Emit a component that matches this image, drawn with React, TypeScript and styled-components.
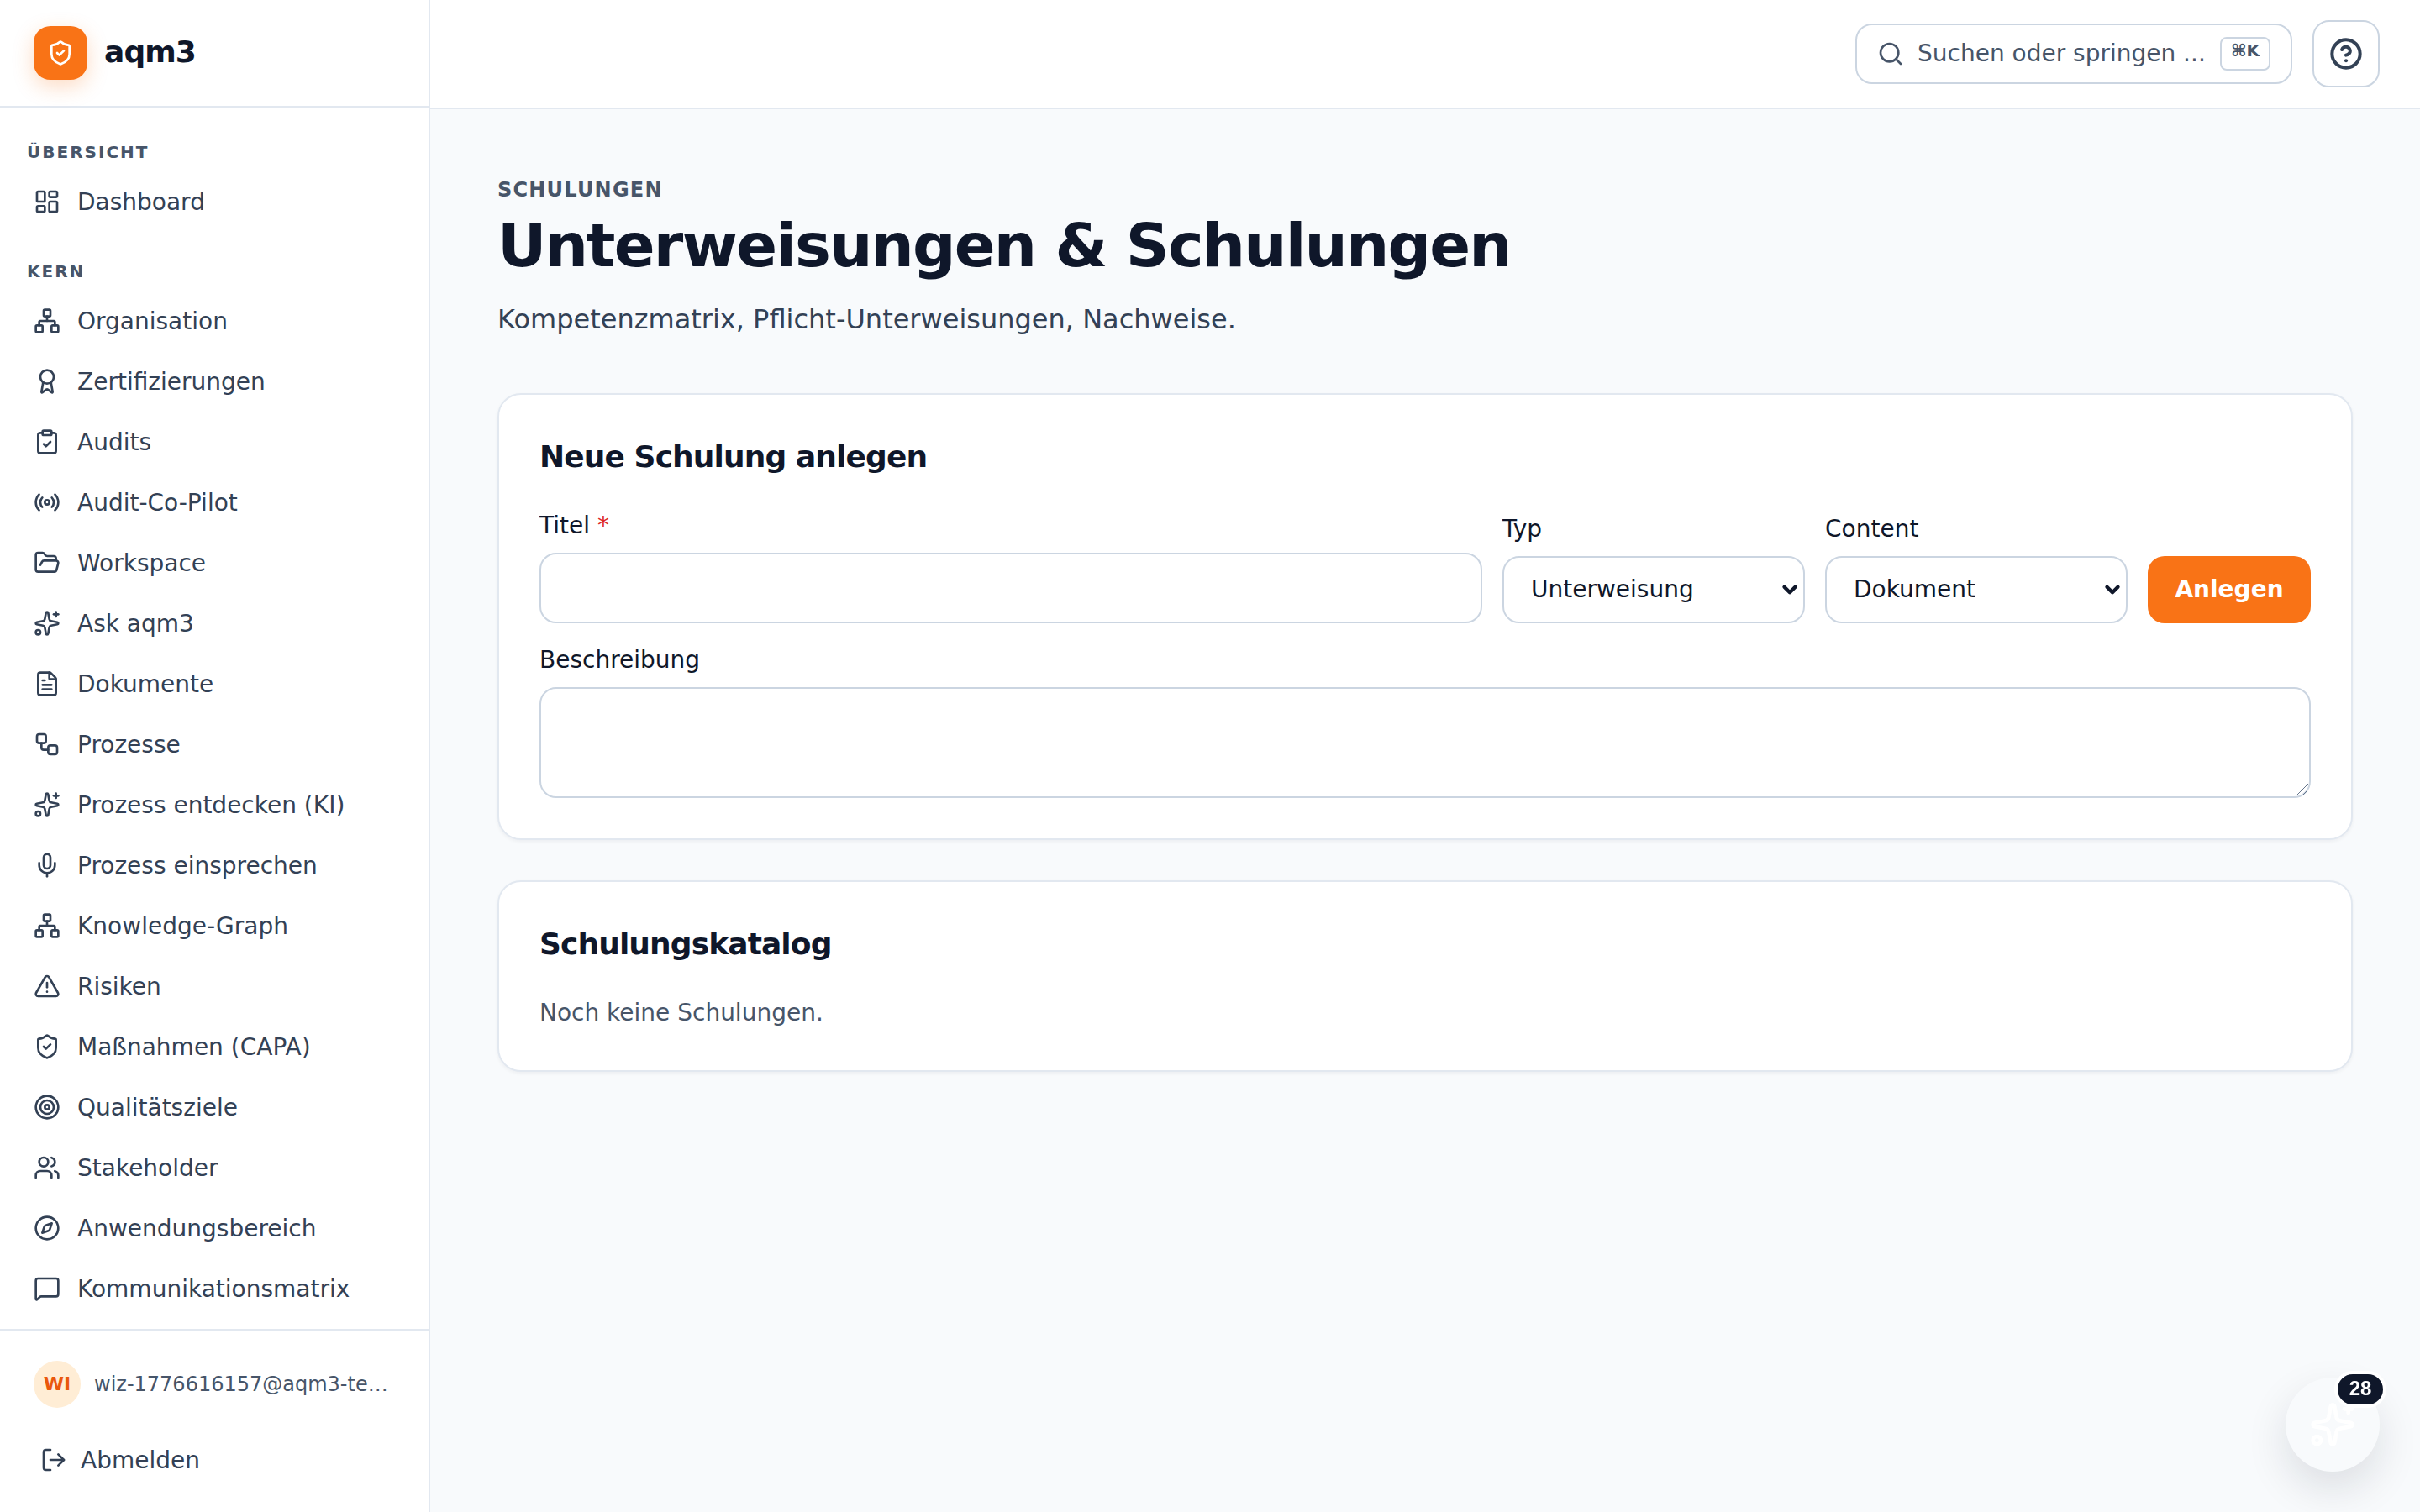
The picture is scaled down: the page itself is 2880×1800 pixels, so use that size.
import React from "react";
import styled, { createGlobalStyle } from "styled-components";
import {
    Award, ChevronDown, CircleHelp, ClipboardCheck, Compass, FileText, FolderOpen, LayoutDashboard, LogOut,
    MessageSquare, Mic, Network, Radio, Search, ShieldCheck, Sparkles, Target, TriangleAlert,
    Users, Workflow,
} from "lucide-react";

// the reference is a 1440x900 page at 2x, so everything below is in 1x px
const GlobalStyle = createGlobalStyle`
    html, body { margin: 0; padding: 0; background: #f8fafc; }
    #root { zoom: 2; }
    * { box-sizing: border-box; }
    body {
        font-family: "DejaVu Sans", sans-serif;
        color: #0f172a;
    }
`;

const sections = [
    {
        title: "Übersicht",
        items: [{ label: "Dashboard", icon: LayoutDashboard }],
    },
    {
        title: "Kern",
        items: [
            { label: "Organisation", icon: Network },
            { label: "Zertifizierungen", icon: Award },
            { label: "Audits", icon: ClipboardCheck },
            { label: "Audit-Co-Pilot", icon: Radio },
            { label: "Workspace", icon: FolderOpen },
            { label: "Ask aqm3", icon: Sparkles },
            { label: "Dokumente", icon: FileText },
            { label: "Prozesse", icon: Workflow },
            { label: "Prozess entdecken (KI)", icon: Sparkles },
            { label: "Prozess einsprechen", icon: Mic },
            { label: "Knowledge-Graph", icon: Network },
            { label: "Risiken", icon: TriangleAlert },
            { label: "Maßnahmen (CAPA)", icon: ShieldCheck },
            { label: "Qualitätsziele", icon: Target },
            { label: "Stakeholder", icon: Users },
            { label: "Anwendungsbereich", icon: Compass },
            { label: "Kommunikationsmatrix", icon: MessageSquare },
        ],
    },
];

export default function App() {
    return (
        <Shell>
            <GlobalStyle />
            <Sidebar>
                <Brand>
                    <LogoMark><ShieldCheck size={16} /></LogoMark>
                    <BrandName>aqm3</BrandName>
                </Brand>
                <Nav>
                    {sections.map((section) => (
                        <NavSection key={section.title}>
                            <SectionLabel>{section.title}</SectionLabel>
                            {section.items.map((item) => (
                                <NavItem key={item.label} href="#">
                                    <item.icon size={16} />
                                    {item.label}
                                </NavItem>
                            ))}
                        </NavSection>
                    ))}
                </Nav>
                <SidebarFooter>
                    <UserRow>
                        <Avatar>WI</Avatar>
                        <UserMail>wiz-1776616157@aqm3-test.example</UserMail>
                    </UserRow>
                    <LogoutButton>
                        <LogOut size={16} />
                        Abmelden
                    </LogoutButton>
                </SidebarFooter>
            </Sidebar>

            <Content>
                <Topbar>
                    <SearchButton>
                        <Search size={16} />
                        <SearchText>Suchen oder springen ...</SearchText>
                        <Kbd>⌘K</Kbd>
                    </SearchButton>
                    <HelpButton><CircleHelp size={20} strokeWidth={2.4} /></HelpButton>
                </Topbar>

                <Main>
                    <Eyebrow>Schulungen</Eyebrow>
                    <PageTitle>Unterweisungen &amp; Schulungen</PageTitle>
                    <Lead>Kompetenzmatrix, Pflicht-Unterweisungen, Nachweise.</Lead>

                    <Card>
                        <CardTitle>Neue Schulung anlegen</CardTitle>
                        <FormRow>
                            <GrowField>
                                <FieldLabel>Titel <Required>*</Required></FieldLabel>
                                <TextInput type="text" />
                            </GrowField>
                            <SelectField>
                                <FieldLabel>Typ</FieldLabel>
                                <SelectWrap>
                                    <Select defaultValue="Unterweisung">
                                        <option>Unterweisung</option>
                                        <option>Schulung</option>
                                    </Select>
                                    <SelectArrow><ChevronDown size={13} strokeWidth={4} /></SelectArrow>
                                </SelectWrap>
                            </SelectField>
                            <SelectField>
                                <FieldLabel>Content</FieldLabel>
                                <SelectWrap>
                                    <Select defaultValue="Dokument">
                                        <option>Dokument</option>
                                        <option>Video</option>
                                    </Select>
                                    <SelectArrow><ChevronDown size={13} strokeWidth={4} /></SelectArrow>
                                </SelectWrap>
                            </SelectField>
                            <PrimaryButton>Anlegen</PrimaryButton>
                        </FormRow>
                        <DescriptionField>
                            <FieldLabel>Beschreibung</FieldLabel>
                            <TextAreaWrap>
                                <TextArea />
                                <ResizeGrip viewBox="0 0 8 8">
                                    <path d="M0.5 7.5 L7.5 0.5 M4 7.5 L7.5 4" />
                                </ResizeGrip>
                            </TextAreaWrap>
                        </DescriptionField>
                    </Card>

                    <Card>
                        <CardTitle>Schulungskatalog</CardTitle>
                        <EmptyText>Noch keine Schulungen.</EmptyText>
                    </Card>
                </Main>
            </Content>

            <Fab>
                <Sparkles size={28} />
                <FabBadge>28</FabBadge>
            </Fab>
        </Shell>
    );
}

const Shell = styled.div`
    display: flex;
    height: 900px;
    overflow: hidden;
`;

const Sidebar = styled.aside`
    width: 256px;
    flex-shrink: 0;
    display: flex;
    flex-direction: column;
    background: #fff;
    border-right: 1px solid #e2e8f0;
`;

const Brand = styled.div`
    height: 64px;
    flex-shrink: 0;
    display: flex;
    align-items: center;
    gap: 10px;
    padding: 0 20px;
    border-bottom: 1px solid #e2e8f0;
`;

const LogoMark = styled.div`
    width: 32px;
    height: 32px;
    display: flex;
    align-items: center;
    justify-content: center;
    border-radius: 10px;
    background: #f97316;
    color: #fff;
    box-shadow: 0 4px 12px rgba(249, 115, 22, 0.25);
`;

const BrandName = styled.span`
    padding-bottom: 2px;
    font-size: 18px;
    font-weight: 700;
    letter-spacing: -0.45px;
    color: #0f172a;
`;

const Nav = styled.nav`
    flex: 1;
    min-height: 0;
    overflow: hidden;
    padding: 19px 0 0;
`;

const NavSection = styled.div`
    & + & { margin-top: 16px; }
`;

const SectionLabel = styled.div`
    margin: 0 0 4px 16px;
    font-size: 10px;
    line-height: 15px;
    font-weight: 700;
    letter-spacing: 1px;
    text-transform: uppercase;
    color: #475569;
`;

const NavItem = styled.a`
    display: flex;
    align-items: center;
    gap: 10px;
    height: 36px;
    padding-left: 20px;
    font-size: 14px;
    color: #334155;
    text-decoration: none;
    svg { flex-shrink: 0; }
`;

const SidebarFooter = styled.div`
    height: 109px;
    flex-shrink: 0;
    padding: 18px 24px 0 20px;
    border-top: 1px solid #e2e8f0;
`;

const UserRow = styled.div`
    display: flex;
    align-items: center;
    gap: 8px;
`;

const Avatar = styled.div`
    width: 28px;
    height: 28px;
    flex-shrink: 0;
    display: flex;
    align-items: center;
    justify-content: center;
    padding-bottom: 1px;
    border-radius: 50%;
    background: #ffedd5;
    color: #ea580c;
    font-size: 11px;
    font-weight: 700;
`;

const UserMail = styled.span`
    min-width: 0;
    overflow: hidden;
    white-space: nowrap;
    text-overflow: ellipsis;
    font-size: 12px;
    color: #475569;
`;

const LogoutButton = styled.button`
    display: flex;
    align-items: center;
    gap: 8px;
    height: 36px;
    margin: 13px 0 0 4px;
    padding: 0;
    border: 0;
    background: none;
    font: inherit;
    font-size: 14px;
    color: #334155;
`;

const Content = styled.div`
    flex: 1;
    min-width: 0;
    display: flex;
    flex-direction: column;
`;

const Topbar = styled.header`
    height: 65px;
    flex-shrink: 0;
    display: flex;
    align-items: center;
    justify-content: flex-end;
    gap: 12px;
    padding: 0 24px;
    background: #fff;
    border-bottom: 1px solid #e2e8f0;
`;

const SearchButton = styled.button`
    width: 260px;
    height: 36px;
    display: flex;
    align-items: center;
    gap: 8px;
    padding: 0 12px;
    border: 1px solid #cbd5e1;
    border-radius: 10px;
    background: #fff;
    color: #475569;
    font: inherit;
    font-size: 14px;
`;

const SearchText = styled.span`
    flex: 1;
    padding-bottom: 1px;
    text-align: left;
    white-space: nowrap;
`;

const Kbd = styled.kbd`
    width: 30px;
    height: 20px;
    flex-shrink: 0;
    padding-bottom: 4px;
    display: flex;
    align-items: center;
    justify-content: center;
    border: 1px solid #cbd5e1;
    border-radius: 4px;
    font-family: "DejaVu Sans", sans-serif;
    font-size: 10px;
    font-weight: 700;
    color: #475569;
`;

const HelpButton = styled.button`
    width: 40px;
    height: 40px;
    display: flex;
    align-items: center;
    justify-content: center;
    padding: 0;
    border: 1px solid #cbd5e1;
    border-radius: 10px;
    background: #fff;
    color: #334155;
`;

const Main = styled.main`
    flex: 1;
    padding: 40px 40px 0;
    background: #f8fafc;
`;

const Eyebrow = styled.div`
    font-size: 12px;
    line-height: 16px;
    font-weight: 700;
    letter-spacing: 0.6px;
    text-transform: uppercase;
    color: #475569;
`;

const PageTitle = styled.h1`
    margin: 5px 0 0;
    font-size: 36px;
    line-height: 40px;
    font-weight: 700;
    letter-spacing: -0.9px;
    color: #0f172a;
`;

const Lead = styled.p`
    margin: 12px 0 32px;
    font-size: 16px;
    line-height: 24px;
    color: #334155;
`;

const Card = styled.section`
    padding: 24px;
    margin-bottom: 24px;
    background: #fff;
    border: 1px solid #e2e8f0;
    border-radius: 14px;
    box-shadow: 0 1px 2px rgba(15, 23, 42, 0.05);
`;

const CardTitle = styled.h2`
    margin: 0;
    font-size: 18px;
    line-height: 26px;
    font-weight: 700;
    letter-spacing: -0.45px;
    color: #0f172a;
`;

const FormRow = styled.div`
    display: flex;
    align-items: flex-end;
    gap: 12px;
    margin-top: 18px;
`;

const GrowField = styled.label`
    flex: 1;
    min-width: 0;
    display: block;
`;

const SelectField = styled.label`
    width: 180px;
    flex-shrink: 0;
    display: block;
`;

const DescriptionField = styled.label`
    display: block;
    margin-top: 12px;
`;

const FieldLabel = styled.span`
    display: block;
    margin-bottom: 6px;
    font-size: 14px;
    line-height: 20px;
    color: #0f172a;
`;

const Required = styled.span`
    color: #dc2626;
`;

const TextInput = styled.input`
    display: block;
    width: 100%;
    height: 42px;
    padding: 0 16px;
    border: 1px solid #cbd5e1;
    border-radius: 10px;
    background: #fff;
`;

const SelectWrap = styled.div`
    position: relative;
`;

const Select = styled.select`
    display: block;
    width: 100%;
    height: 40px;
    padding: 0 24px 1px 16px;
    appearance: none;
    border: 1px solid #cbd5e1;
    border-radius: 10px;
    background: #fff;
    color: #0f172a;
    font-family: inherit;
    font-size: 14px;
`;

const SelectArrow = styled.span`
    position: absolute;
    top: 0;
    right: 2.5px;
    height: 40px;
    display: flex;
    align-items: center;
    color: #0f172a;
    pointer-events: none;
`;

const PrimaryButton = styled.button`
    width: 97px;
    height: 40px;
    flex-shrink: 0;
    padding: 0 0 1px;
    border: 0;
    border-radius: 10px;
    background: #f97316;
    color: #fff;
    font: inherit;
    font-size: 14px;
    font-weight: 700;
`;

const TextAreaWrap = styled.div`
    position: relative;
`;

const TextArea = styled.textarea`
    display: block;
    width: 100%;
    height: 66px;
    padding: 8px 12px;
    resize: none;
    border: 1px solid #cbd5e1;
    border-radius: 10px;
    background: #fff;
    font: inherit;
`;

const ResizeGrip = styled.svg`
    position: absolute;
    right: 1px;
    bottom: 1px;
    width: 8px;
    height: 8px;
    fill: none;
    stroke: #64748b;
    stroke-width: 0.5;
    pointer-events: none;
`;

const EmptyText = styled.p`
    margin: 18px 0 0;
    font-size: 14px;
    line-height: 20px;
    color: #475569;
`;

const Fab = styled.button`
    position: fixed;
    right: 24px;
    bottom: 24px;
    width: 56px;
    height: 56px;
    display: flex;
    align-items: center;
    justify-content: center;
    padding: 0;
    border: 0;
    border-radius: 50%;
    background: #f8fafc;
    color: #fff;
    box-shadow: 0 10px 25px rgba(15, 23, 42, 0.12);
`;

const FabBadge = styled.span`
    position: absolute;
    top: -4px;
    right: -4px;
    width: 31px;
    height: 22px;
    padding-bottom: 1px;
    display: flex;
    align-items: center;
    justify-content: center;
    border: 2px solid #fff;
    border-radius: 11px;
    background: #0f172a;
    color: #fff;
    font-size: 12px;
    font-weight: 700;
`;
